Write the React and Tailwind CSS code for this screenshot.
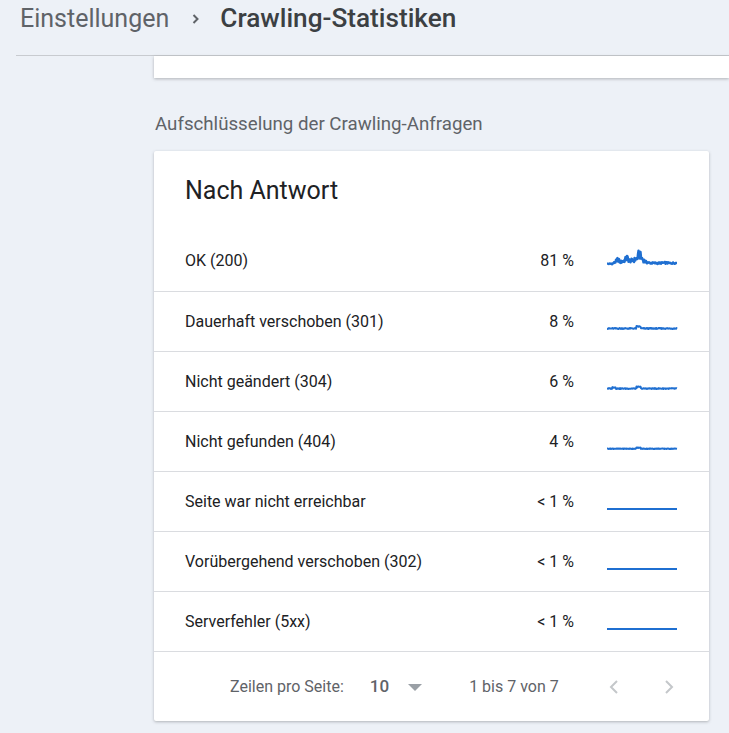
import React from "react";

const rows = [
  { label: "OK (200)", pct: "81 %", kind: "ok" },
  { label: "Dauerhaft verschoben (301)", pct: "8 %", kind: "small", amp: 1.2 },
  { label: "Nicht geändert (304)", pct: "6 %", kind: "small", amp: 1 },
  { label: "Nicht gefunden (404)", pct: "4 %", kind: "small", amp: 0.6 },
  { label: "Seite war nicht erreichbar", pct: "< 1 %", kind: "flat" },
  { label: "Vorübergehend verschoben (302)", pct: "< 1 %", kind: "flat" },
  { label: "Serverfehler (5xx)", pct: "< 1 %", kind: "flat" },
];

// deterministic noise for the sparklines
function noise(i, seed) {
  const x = Math.sin(i * 12.9898 + seed * 78.233) * 43758.5453;
  return x - Math.floor(x);
}

// envelope of the "OK (200)" line: x in 0..70 -> height above baseline
function okEnvelope(x) {
  const pts = [
    [0, 1.5], [6, 2], [9, 5], [11, 8], [13, 4], [16, 5], [18, 7], [20, 10], [22, 6],
    [26, 6], [29, 8], [31, 11], [32, 17], [34, 11], [36, 7], [39, 4], [42, 3],
    [50, 2.5], [58, 3], [64, 2.5], [70, 3],
  ];
  for (let k = 0; k < pts.length - 1; k++) {
    const [x0, y0] = pts[k];
    const [x1, y1] = pts[k + 1];
    if (x >= x0 && x <= x1) return y0 + ((x - x0) / (x1 - x0)) * (y1 - y0);
  }
  return 0;
}

function sparkPath(row, seed) {
  const pts = [];
  const base = row.kind === "ok" ? 20 : 23;
  for (let s = 0; s <= 140; s++) {
    const x = s / 2;
    let h = 0;
    if (row.kind === "ok") {
      const env = okEnvelope(x);
      h = env * (0.4 + noise(s, seed) * 0.65);
    } else if (row.kind === "small") {
      h = noise(s, seed) * 0.9 * row.amp;
      if (x > 29 && x < 34) h += 1.6 * row.amp;
      if (seed === 3 && x > 5 && x < 9) h += 1.2;
    }
    pts.push(`${x.toFixed(2)},${(base - h).toFixed(2)}`);
  }
  return "M" + pts.join(" L");
}

function Sparkline({ row, seed }) {
  return (
    <svg width="72" height="32" viewBox="0 0 72 32" className="block">
      <path
        d={sparkPath(row, seed)}
        fill="none"
        stroke="#1f6fd1"
        strokeWidth={row.kind === "ok" ? 2.4 : 2}
        strokeLinejoin="round"
      />
    </svg>
  );
}

export default function App() {
  return (
    <div className="h-[733px] overflow-hidden bg-[#edf1f7] font-['Roboto',sans-serif]">
      <div className="flex items-center h-[37px] pl-5">
        <span className="text-[25px] text-[#5f6368]">Einstellungen</span>
        <svg width="24" height="24" viewBox="0 0 24 24" className="ml-[15px] mr-[12px] text-[#5f6368]">
          <path d="M9.5 8l4 4-4 4" fill="none" stroke="currentColor" strokeWidth="2" />
        </svg>
        <span className="text-[26.2px] text-[#3c4043] font-medium">Crawling-Statistiken</span>
      </div>
      <div className="ml-4 mt-[18px] border-t border-[#c8cbd0]" />
      <div className="ml-[154px] h-[22px] bg-white shadow-[0_1px_3px_rgba(60,64,67,0.35)]" />
      <div className="ml-[155px] mt-[34px] h-[24px] leading-[24px] text-[18.7px] text-[#5f6368]">
        Aufschlüsselung der Crawling-Anfragen
      </div>
      <div className="ml-[154px] mt-[15px] w-[555px] bg-white rounded-[2px] shadow-[0_1px_3px_rgba(60,64,67,0.35)]">
        <div className="pl-[31px] pt-[24px] pb-[24px] h-[80px] leading-[32px] text-[25px] text-[#202124]">
          Nach Antwort
        </div>
        {rows.map((r, i) => (
          <div
            key={r.label}
            className={`flex items-center h-[60px] pl-[31px] text-[16px] text-[#202124] ${i > 0 ? "border-t border-[#dadce0]" : ""}`}
          >
            <span className="flex-1">{r.label}</span>
            <span className="w-[80px] text-right">{r.pct}</span>
            <div className="ml-[33px] mr-[30px]">
              <Sparkline row={r} seed={i + 1} />
            </div>
          </div>
        ))}
        <div className="flex items-center h-[70px] border-t border-[#dadce0] text-[16px] text-[#5f6368]">
          <span className="ml-[76px]">Zeilen pro Seite:</span>
          <span className="ml-[26px] text-[17px] font-medium text-[#5f6368]">10</span>
          <svg width="14" height="8" viewBox="0 0 14 8" className="ml-[19px] mt-[2px]">
            <path d="M0 0h14L7 7z" fill="#9aa0a6" />
          </svg>
          <span className="ml-[47px]">1 bis 7 von 7</span>
          <svg width="24" height="24" viewBox="0 0 24 24" className="ml-[43px]">
            <path d="M15 6l-6 6 6 6" fill="none" stroke="#c4c7ca" strokeWidth="2" />
          </svg>
          <svg width="24" height="24" viewBox="0 0 24 24" className="ml-[31px]">
            <path d="M9 6l6 6-6 6" fill="none" stroke="#c4c7ca" strokeWidth="2" />
          </svg>
        </div>
      </div>
    </div>
  );
}
